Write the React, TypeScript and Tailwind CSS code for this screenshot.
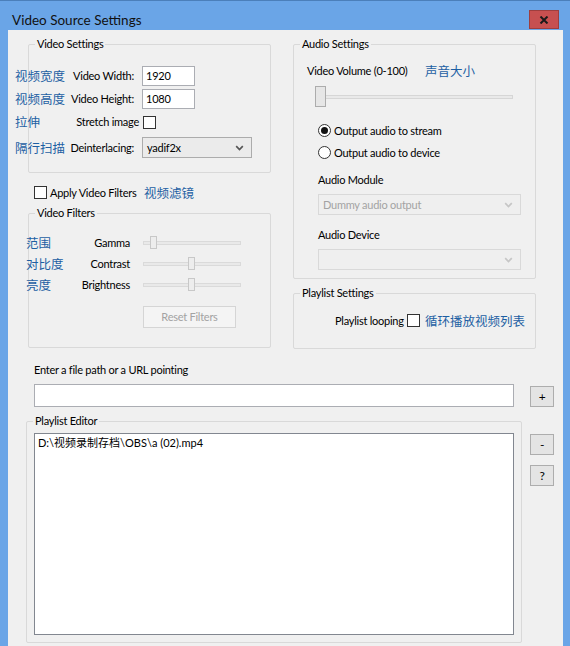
import React from "react";

const font = "font-['Lato','Noto_Sans_CJK_SC',sans-serif]";

const Zh = ({ children, className = "" }: { children: React.ReactNode; className?: string }) => (
  <span
    className={`whitespace-nowrap tracking-normal text-[12.5px] leading-[16px] text-[#1d5fa3] font-['Noto_Sans_CJK_SC',sans-serif] ${className}`}
  >
    {children}
  </span>
);

const Group = ({
  title,
  className,
  children,
}: {
  title: string;
  className: string;
  children?: React.ReactNode;
}) => (
  <div className={`flex flex-col border border-[#d9d9d9] rounded-[2px] ${className}`}>
    <span className="block w-fit -mt-[8px] ml-[6px] px-[2px] bg-[#f0f0f0] leading-[14px] whitespace-nowrap">{title}</span>
    {children}
  </div>
);

const CheckBox = ({ className = "" }: { className?: string }) => (
  <span className={`block w-[13px] h-[13px] shrink-0 bg-white border border-[#333333] ${className}`} />
);

const Radio = ({ checked }: { checked?: boolean }) => (
  <span className="flex items-center justify-center w-[13px] h-[13px] shrink-0 rounded-full bg-white border border-[#333333]">
    {checked && <span className="block w-[7px] h-[7px] rounded-full bg-[#111111]" />}
  </span>
);

const Chevron = ({ color }: { color: string }) => (
  <svg width="9" height="6" viewBox="0 0 9 6">
    <path d="M1.2 1.2 L4.5 4.5 L7.8 1.2" fill="none" stroke={color} strokeWidth="1.7" />
  </svg>
);

const Select = ({ value, disabled, className }: { value: string; disabled?: boolean; className: string }) => (
  <div
    className={`flex items-center justify-between pl-[4px] pr-[7px] border whitespace-nowrap ${
      disabled ? "border-[#d9d9d9] bg-[#efefef] text-[#a3a3a3]" : "border-[#acacac] bg-[#ebebeb] text-black"
    } ${className}`}
  >
    <span>{value}</span>
    <Chevron color={disabled ? "#c6c6c6" : "#555555"} />
  </div>
);

const FilterSlider = ({ pos }: { pos: number }) => (
  <div className="relative w-[98px] h-[13px] ml-[13px] flex items-center">
    <div className="w-full h-[4px] bg-[#e9e9e9] border border-[#dadada]" />
    <div
      className="absolute top-0 w-[7px] h-[13px] bg-[#ededed] border border-[#c8c8c8]"
      style={{ left: pos }}
    />
  </div>
);

const SmallButton = ({ label, className = "" }: { label: string; className?: string }) => (
  <div
    className={`flex items-center justify-center w-[24px] h-[21px] bg-[#e4e4e4] border border-[#adadad] text-[12px] ${className}`}
  >
    {label}
  </div>
);

export default function App() {
  return (
    <div
      className={`w-[570px] h-[646px] overflow-hidden bg-[#6aa5e7] flex flex-col text-[11px] leading-[14px] tracking-[-0.25px] text-black ${font}`}
    >
      {/* title bar */}
      <div className="h-[30px] shrink-0 flex items-start justify-between border-t border-[#4b7fba]">
        <span className="mt-[10px] ml-[12px] text-[13.5px] leading-[18px] tracking-normal text-[#111] whitespace-nowrap">
          Video Source Settings
        </span>
        <div className="mt-[9px] mr-[11px] w-[30px] h-[19px] bg-[#c75050] border border-[#9e3e3e] flex items-center justify-center">
          <svg width="10" height="8" viewBox="0 0 10 8">
            <path d="M1.5 0.5 L8.5 7.5 M8.5 0.5 L1.5 7.5" stroke="#1a1a1a" strokeWidth="2" />
          </svg>
        </div>
      </div>

      {/* client */}
      <div className="flex-1 ml-[8px] mr-[7px] bg-[#f0f0f0] flex flex-col">
        <div className="flex items-start pl-[20px] gap-[22px]">
          {/* left column */}
          <div className="w-[243px] flex flex-col">
            <Group title="Video Settings" className="mt-[14px] h-[129px]">
              <div className="flex flex-col -ml-[14px] mt-[15px]">
                <div className="flex items-center h-[20px]">
                  <Zh className="w-[55px]">视频宽度</Zh>
                  <span className="w-[64px] text-right whitespace-nowrap">Video Width:</span>
                  <div className="ml-[8px] w-[53px] h-[20px] bg-white border border-[#abadb3] flex items-center pl-[3px]">
                    1920
                  </div>
                </div>
                <div className="flex items-center h-[20px] mt-[3px]">
                  <Zh className="w-[55px]">视频高度</Zh>
                  <span className="w-[64px] text-right whitespace-nowrap">Video Height:</span>
                  <div className="ml-[8px] w-[53px] h-[20px] bg-white border border-[#abadb3] flex items-center pl-[3px]">
                    1080
                  </div>
                </div>
                <div className="flex items-center h-[20px] mt-[3px]">
                  <Zh className="w-[55px]">拉伸</Zh>
                  <span className="w-[69px] text-right whitespace-nowrap">Stretch image</span>
                  <CheckBox className="ml-[4px]" />
                </div>
                <div className="flex items-center h-[21px] mt-[5px]">
                  <Zh className="w-[55px]">隔行扫描</Zh>
                  <span className="w-[64px] text-right whitespace-nowrap">Deinterlacing:</span>
                  <Select value="yadif2x" className="ml-[8px] w-[110px] h-[21px]" />
                </div>
              </div>
            </Group>

            <div className="flex items-center h-[13px] mt-[13px] ml-[6px]">
              <CheckBox />
              <span className="ml-[3px] w-[85px] whitespace-nowrap">Apply Video Filters</span>
              <Zh className="ml-[9px]">视频滤镜</Zh>
            </div>

            <Group title="Video Filters" className="mt-[14px] h-[135px]">
              <div className="flex flex-col -ml-[3px] mt-[12px]">
                {[
                  { zh: "范围", en: "Gamma", pos: 7 },
                  { zh: "对比度", en: "Contrast", pos: 45 },
                  { zh: "亮度", en: "Brightness", pos: 45 },
                ].map((r) => (
                  <div key={r.en} className="flex items-center h-[21px]">
                    <Zh className="w-[46px]">{r.zh}</Zh>
                    <span className="w-[58px] text-right whitespace-nowrap">{r.en}</span>
                    <FilterSlider pos={r.pos} />
                  </div>
                ))}
              </div>
              <div className="mt-[11px] ml-[114px] w-[93px] h-[22px] flex items-center justify-center border border-[#d5d5d5] bg-[#f4f4f4] text-[#a3a3a3] whitespace-nowrap">
                Reset Filters
              </div>
            </Group>
          </div>

          {/* right column */}
          <div className="w-[243px] flex flex-col">
            <Group title="Audio Settings" className="mt-[14px] h-[235px]">
              <div className="flex items-center h-[16px] mt-[12px] ml-[13px]">
                <span className="w-[103px] whitespace-nowrap">Video Volume (0-100)</span>
                <Zh className="ml-[15px]">声音大小</Zh>
              </div>
              <div className="relative mt-[7px] ml-[21px] w-[198px] h-[21px] flex items-center">
                <div className="w-full h-[4px] bg-[#e9e9e9] border border-[#d6d6d6]" />
                <div className="absolute left-0 top-0 w-[11px] h-[21px] bg-[#e6e6e6] border border-[#acacac]" />
              </div>
              <div className="flex items-center h-[13px] mt-[17px] ml-[24px]">
                <Radio checked />
                <span className="ml-[3px] whitespace-nowrap">Output audio to stream</span>
              </div>
              <div className="flex items-center h-[13px] mt-[9px] ml-[24px]">
                <Radio />
                <span className="ml-[3px] whitespace-nowrap">Output audio to device</span>
              </div>
              <span className="block h-[14px] mt-[14px] ml-[24px] whitespace-nowrap">Audio Module</span>
              <Select value="Dummy audio output" disabled className="mt-[7px] ml-[24px] w-[203px] h-[21px]" />
              <span className="block h-[14px] mt-[13px] ml-[24px] whitespace-nowrap">Audio Device</span>
              <Select value="" disabled className="mt-[7px] ml-[24px] w-[203px] h-[21px]" />
            </Group>

            <Group title="Playlist Settings" className="mt-[14px] h-[56px]">
              <div className="flex items-center h-[13px] mt-[14px] ml-[41px]">
                <span className="w-[68px] whitespace-nowrap">Playlist looping</span>
                <CheckBox className="ml-[4px]" />
                <Zh className="ml-[5px]">循环播放视频列表</Zh>
              </div>
            </Group>
          </div>
        </div>

        {/* bottom */}
        <span className="block h-[14px] mt-[14px] ml-[26px] whitespace-nowrap">Enter a file path or a URL pointing</span>
        <div className="flex items-start mt-[7px] ml-[26px]">
          <div className="w-[480px] h-[23px] bg-white border border-[#abadb3]" />
          <SmallButton label="+" className="ml-[16px] mt-[2px]" />
        </div>
        <div className="flex items-start mt-[14px] ml-[18px]">
          <Group title="Playlist Editor" className="w-[496px] h-[222px]">
            <div className="mt-[5px] ml-[7px] w-[480px] h-[202px] bg-white border border-[#828790] px-[3px] pt-[2px] whitespace-nowrap tracking-normal">
              {"D:\\视频录制存档\\OBS\\a (02).mp4"}
            </div>
          </Group>
          <div className="flex flex-col ml-[8px]">
            <SmallButton label="-" className="mt-[13px]" />
            <SmallButton label="?" className="mt-[10px]" />
          </div>
        </div>
      </div>
    </div>
  );
}
